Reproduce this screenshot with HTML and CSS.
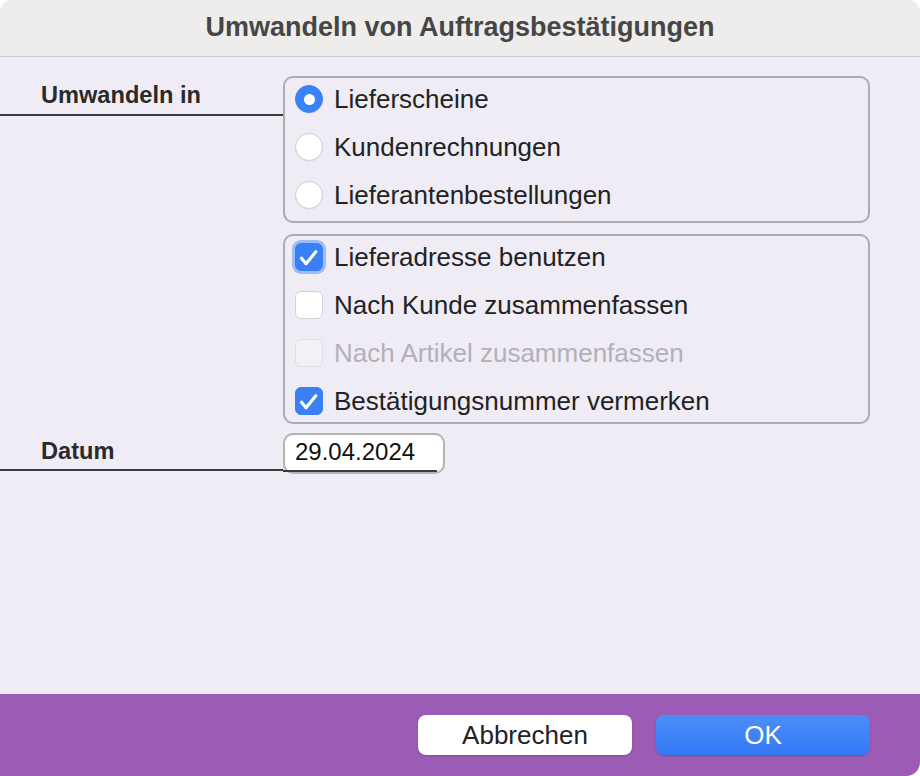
FILE: index.html
```html
<!DOCTYPE html>
<html lang="de">
<head>
<meta charset="utf-8">
<title>Umwandeln von Auftragsbestätigungen</title>
<link rel="stylesheet" href="styles.css">
</head>
<body>
<div class="window">
  <header class="titlebar">Umwandeln von Auftragsbestätigungen</header>
  <main class="content">
    <div class="row row-top">
      <div class="label"><span>Umwandeln in</span></div>
      <div class="groups">
        <div class="group radios">
          <div class="opt"><span class="radio on"></span><span>Lieferscheine</span></div>
          <div class="opt"><span class="radio"></span><span>Kundenrechnungen</span></div>
          <div class="opt"><span class="radio"></span><span>Lieferantenbestellungen</span></div>
        </div>
        <div class="group checks">
          <div class="opt"><span class="check on focus"><svg viewBox="0 0 28 28"><path d="M6.5 15.2l4.6 5.6L20.8 8.8" /></svg></span><span>Lieferadresse benutzen</span></div>
          <div class="opt"><span class="check"></span><span>Nach Kunde zusammenfassen</span></div>
          <div class="opt disabled"><span class="check"></span><span>Nach Artikel zusammenfassen</span></div>
          <div class="opt"><span class="check on"><svg viewBox="0 0 28 28"><path d="M6.5 15.2l4.6 5.6L20.8 8.8" /></svg></span><span>Bestätigungsnummer vermerken</span></div>
        </div>
      </div>
    </div>
    <div class="row row-date">
      <div class="label"><span>Datum</span></div>
      <div class="datefield"><span class="datetext">29.04.2024</span></div>
    </div>
  </main>
  <footer class="footer">
    <button class="btn cancel">Abbrechen</button>
    <button class="btn ok">OK</button>
  </footer>
</div>
</body>
</html>
```
FILE: styles.css
```css
html, body {
  margin: 0;
  padding: 0;
  background: #ffffff;
}
body {
  width: 920px;
  height: 776px;
  overflow: hidden;
  font-family: "Liberation Sans", Arial, sans-serif;
}
.window {
  width: 920px;
  height: 776px;
  display: flex;
  flex-direction: column;
  border-radius: 12px 12px 14px 0;
  overflow: hidden;
  background: #efecf5;
}
.titlebar {
  border-bottom: 1px solid #c9c6cc;
  background: #eeedeb;
  display: flex;
  align-items: center;
  justify-content: center;
  font-weight: bold;
  font-size: 27px;
  color: #464646;
  padding-bottom: 2px;
  box-sizing: border-box;
  height: 57px;
  flex: none;
}
.content {
  flex: 1;
  padding-top: 19px;
  display: flex;
  flex-direction: column;
}
.row {
  display: flex;
  align-items: flex-start;
}
.label {
  width: 283px;
  flex: none;
  box-sizing: border-box;
  padding-left: 41px;
  font-weight: bold;
  font-size: 23.6px;
  color: #2a2a2a;
  border-bottom: 2px solid #3a3a3a;
}
.row-top .label {
  padding-top: 6px;
  height: 40px;
}
.groups {
  width: 587px;
  display: flex;
  flex-direction: column;
  gap: 11px;
}
.group {
  border: 2px solid #acacac;
  border-radius: 10px;
  padding: 2px 11px 0 10px;
  display: flex;
  flex-direction: column;
  gap: 12px;
  box-sizing: border-box;
}
.radios {
  height: 147px;
  padding-top: 3px;
}
.checks {
  height: 190px;
  padding-top: 3px;
}
.opt {
  display: flex;
  align-items: center;
  height: 36px;
  flex: none;
  font-size: 26px;
  color: #222222;
  gap: 11px;
}
.opt.disabled {
  color: #b3b1b7;
}
.radio {
  width: 28px;
  height: 28px;
  border-radius: 50%;
  background: #ffffff;
  border: 1px solid #cfcdd2;
  box-sizing: border-box;
  position: relative;
  flex: none;
  box-shadow: 0 0.5px 1px rgba(0,0,0,0.08);
}
.radio.on {
  background: #3a82f7;
  border-color: #3a82f7;
}
.radio.on::after {
  content: "";
  position: absolute;
  left: 50%;
  top: 50%;
  width: 11px;
  height: 11px;
  margin: -5.5px 0 0 -5.5px;
  border-radius: 50%;
  background: #ffffff;
}
.check {
  width: 28px;
  height: 28px;
  border-radius: 6px;
  background: #ffffff;
  border: 1px solid #d4d2d7;
  box-sizing: border-box;
  flex: none;
  position: relative;
}
.disabled .check {
  background: #f3f1f6;
  border-color: #e0dee3;
}
.check.on {
  background: #3a80f5;
  border-color: #3a80f5;
}
.check.focus {
  box-shadow: 0 0 0 3px #9dbcf4;
}
.check svg {
  position: absolute;
  left: -1px;
  top: -1px;
  width: 28px;
  height: 28px;
}
.check path {
  fill: none;
  stroke: #ffffff;
  stroke-width: 3.2;
  stroke-linecap: round;
  stroke-linejoin: round;
}
.row-date {
  margin-top: 10px;
}
.row-date .label {
  height: 37px;
  padding-top: 4px;
}
.datefield {
  width: 162px;
  height: 41px;
  box-sizing: border-box;
  border: 2px solid #b3b3b3;
  border-radius: 10px;
  background: #ffffff;
  margin-top: -1px;
  padding: 3px 0 0 10px;
  font-size: 24px;
  color: #111111;
  position: relative;
}
.datefield::after {
  content: "";
  position: absolute;
  left: -2px;
  right: 6px;
  top: 35px;
  height: 2px;
  background: #3a3a3a;
}
.footer {
  height: 82px;
  flex: none;
  background: #9c5cb6;
  display: flex;
  align-items: center;
  justify-content: flex-end;
  gap: 24px;
  padding-right: 50px;
  box-sizing: border-box;
}
.btn {
  width: 214px;
  height: 40px;
  border: none;
  border-radius: 8px;
  font-family: "Liberation Sans", Arial, sans-serif;
  font-size: 26px;
  padding: 0;
  box-shadow: 0 1px 2px rgba(0,0,0,0.2);
}
.cancel {
  background: #ffffff;
  color: #222222;
}
.ok {
  background: linear-gradient(#4a8ff7, #3479f6);
  color: #ffffff;
}
```
